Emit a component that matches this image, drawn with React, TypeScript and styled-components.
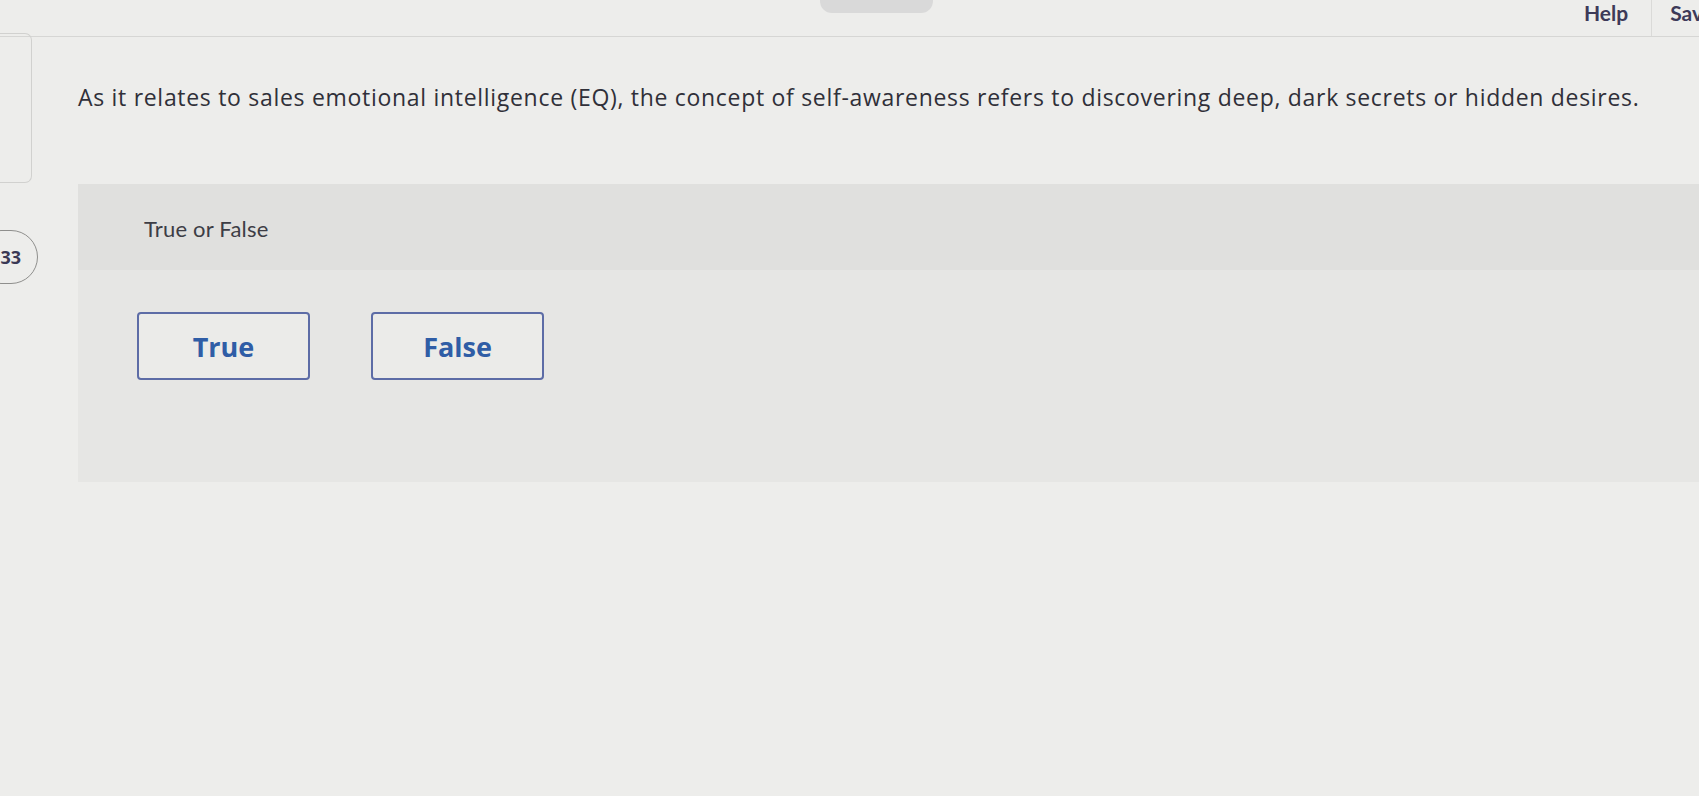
import React from 'react';
import styled, { createGlobalStyle } from 'styled-components';

const GlobalStyle = createGlobalStyle`
  html, body {
    margin: 0;
    padding: 0;
    background: #ededeb;
    overflow: hidden;
  }
  body {
    font-family: Lato, "Open Sans", "Liberation Sans", sans-serif;
    color: #34343f;
  }
`;

const Page = styled.div`
  width: 1699px;
  height: 796px;
  display: flex;
  flex-direction: column;
  background: #ededeb;
`;

const TopBar = styled.header`
  height: 36px;
  flex-shrink: 0;
  display: flex;
  align-items: stretch;
  border-bottom: 1px solid #d6d6d4;
  white-space: nowrap;
`;

const Tab = styled.div`
  margin-left: 820px;
  width: 113px;
  height: 13px;
  flex-shrink: 0;
  background: #d9d9d9;
  border-radius: 0 0 12px 12px;
`;

const NavLinks = styled.nav`
  margin-left: 651px;
  display: flex;
  align-items: flex-start;
  flex-shrink: 0;
`;

const NavLink = styled.a<{ $divided?: boolean }>`
  font-size: 21px;
  font-weight: 700;
  color: #3d3a58;
  line-height: 26px;
  padding: 0 ${(p) => (p.$divided ? '23px' : '0')} 0 ${(p) => (p.$divided ? '0' : '18px')};
  height: 100%;
  border-right: ${(p) => (p.$divided ? '1px solid #dadad8' : 'none')};
  cursor: pointer;
`;

const Main = styled.main`
  flex: 1;
  display: flex;
`;

const Gutter = styled.aside`
  width: 78px;
  flex-shrink: 0;
  display: flex;
  flex-direction: column;
  align-items: flex-start;
`;

const PrevCard = styled.div`
  width: 32px;
  height: 150px;
  margin-top: -4px;
  box-sizing: border-box;
  border: 1px solid #d1d1cf;
  border-left: none;
  border-radius: 0 7px 7px 0;
`;

const QuestionBadge = styled.div`
  margin-top: 47px;
  margin-left: -26px;
  width: 64px;
  height: 54px;
  box-sizing: border-box;
  border: 1px solid #8f8f8d;
  border-radius: 27px;
  display: flex;
  align-items: center;
  justify-content: flex-end;
  padding-right: 16px;
  font-family: "Open Sans", "Liberation Sans", sans-serif;
  font-size: 18px;
  font-weight: 700;
  color: #3a3955;
`;

const Content = styled.section`
  flex: 1;
  display: flex;
  flex-direction: column;
`;

const Prompt = styled.p`
  margin: 0;
  height: 147px;
  box-sizing: border-box;
  padding-top: 45px;
  font-family: "Open Sans", "Liberation Sans", sans-serif;
  font-size: 23px;
  letter-spacing: 0.7px;
  line-height: 30px;
  color: #303039;
  white-space: nowrap;
`;

const AnswerPanel = styled.div`
  background: #e6e6e4;
  display: flex;
  flex-direction: column;
`;

const PanelHeader = styled.div`
  height: 86px;
  box-sizing: border-box;
  padding: 31px 0 0 66px;
  background: #e0e0de;
  font-size: 22px;
  letter-spacing: 0.2px;
  line-height: 28px;
  color: #3d3d45;
`;

const Choices = styled.div`
  display: flex;
  gap: 61px;
  padding: 42px 0 0 59px;
  height: 212px;
  box-sizing: border-box;
`;

const ChoiceButton = styled.button`
  width: 173px;
  height: 68px;
  box-sizing: border-box;
  border: 2px solid #5d6ca6;
  border-radius: 4px;
  background: #ebebe9;
  font-family: "Open Sans", "Liberation Sans", sans-serif;
  font-size: 27px;
  font-weight: 700;
  color: #2f5da6;
  cursor: pointer;
`;

export default function App() {
  return (
    <>
      <GlobalStyle />
      <Page>
        <TopBar>
          <Tab />
          <NavLinks>
            <NavLink $divided>Help</NavLink>
            <NavLink>Save &amp; Exit</NavLink>
          </NavLinks>
        </TopBar>
        <Main>
          <Gutter>
            <PrevCard />
            <QuestionBadge>33</QuestionBadge>
          </Gutter>
          <Content>
            <Prompt>
              As it relates to sales emotional intelligence (EQ), the concept of self-awareness refers to
              discovering deep, dark secrets or hidden desires.
            </Prompt>
            <AnswerPanel>
              <PanelHeader>True or False</PanelHeader>
              <Choices>
                <ChoiceButton>True</ChoiceButton>
                <ChoiceButton>False</ChoiceButton>
              </Choices>
            </AnswerPanel>
          </Content>
        </Main>
      </Page>
    </>
  );
}
